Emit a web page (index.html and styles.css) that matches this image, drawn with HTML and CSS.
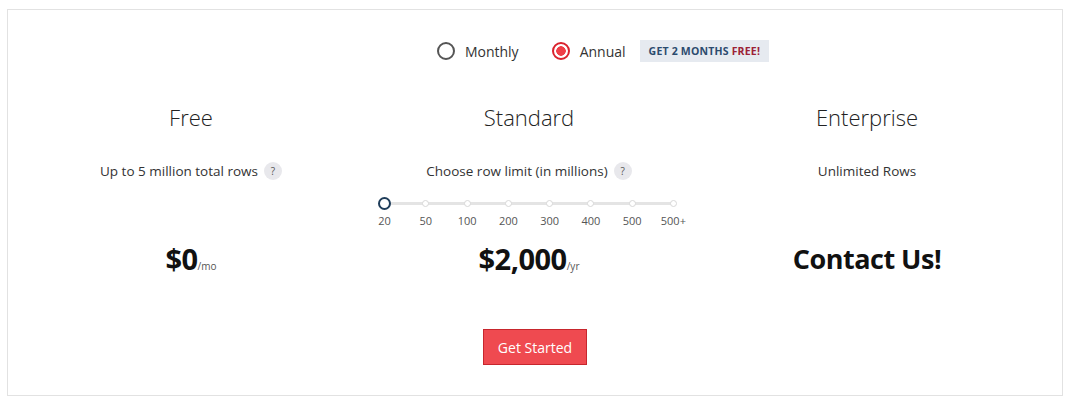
FILE: index.html
```html
<!DOCTYPE html>
<html lang="en">
<head>
    <meta charset="UTF-8">
    <meta name="viewport" content="width=device-width, initial-scale=1.0">
    <title>Pricing</title>
    <link rel="stylesheet" href="styles.css">
</head>
<body>
    <div class="card">
        <div class="billing">
            <label class="radio">
                <span class="dot"></span>
                Monthly
            </label>
            <label class="radio checked">
                <span class="dot"></span>
                Annual
            </label>
            <span class="promo">GET 2 MONTHS <em>FREE!</em></span>
        </div>

        <div class="plans">
            <div class="plan">
                <h2>Free</h2>
                <div class="detail">
                    <p class="limit">Up to 5 million total rows <span class="help">?</span></p>
                </div>
                <div class="price"><strong>$0</strong><small>/mo</small></div>
            </div>

            <div class="plan">
                <h2>Standard</h2>
                <div class="detail">
                    <p class="limit">Choose row limit (in millions) <span class="help">?</span></p>
                    <div class="slider">
                        <div class="track">
                            <span class="knob active"></span>
                            <span class="knob"></span>
                            <span class="knob"></span>
                            <span class="knob"></span>
                            <span class="knob"></span>
                            <span class="knob"></span>
                            <span class="knob"></span>
                            <span class="knob"></span>
                        </div>
                        <div class="ticks">
                            <span>20</span>
                            <span>50</span>
                            <span>100</span>
                            <span>200</span>
                            <span>300</span>
                            <span>400</span>
                            <span>500</span>
                            <span>500+</span>
                        </div>
                    </div>
                </div>
                <div class="price"><strong>$2,000</strong><small>/yr</small></div>
            </div>

            <div class="plan">
                <h2>Enterprise</h2>
                <div class="detail">
                    <p class="limit">Unlimited Rows</p>
                </div>
                <div class="price contact"><strong>Contact Us!</strong></div>
            </div>
        </div>

        <div class="actions">
            <button class="start">Get Started</button>
        </div>
    </div>
</body>
</html>
```

FILE: styles.css
```css
body {
    margin: 0;
    background-color: #fff;
    font-family: 'Open Sans', 'Noto Sans', sans-serif;
    color: #222;
}
.card {
    margin: 9px 7px 0 7px;
    height: 387px;
    box-sizing: border-box;
    border: 1px solid #e2e2e2;
    display: flex;
    flex-direction: column;
}
.billing {
    display: flex;
    justify-content: center;
    align-items: center;
    padding-left: 136px;
    margin-top: 30px;
    height: 22px;
    font-size: 14px;
    color: #333;
}
.radio {
    display: flex;
    align-items: center;
    gap: 10px;
    margin-right: 33px;
}
.radio + .radio {
    margin-right: 14px;
}
.dot {
    width: 18px;
    height: 18px;
    box-sizing: border-box;
    border: 2px solid #555;
    border-radius: 50%;
    background: #fff;
}
.radio.checked .dot {
    border-color: #d9222d;
    background: radial-gradient(circle, #ef3e47 0 4.5px, #fff 5px);
}
.promo {
    background-color: #e6eaf0;
    color: #2c4b6e;
    font-size: 10.5px;
    font-weight: 700;
    padding: 4px 9px;
    letter-spacing: 0.2px;
}
.promo em {
    font-style: normal;
    color: #9c2236;
}
.plans {
    display: grid;
    grid-template-columns: repeat(3, 338px);
    padding-left: 14px;
    margin-top: 40px;
}
.plan {
    display: flex;
    flex-direction: column;
    align-items: center;
}
h2 {
    margin: 0;
    font-size: 22px;
    font-weight: 300;
    line-height: 30px;
    color: #222;
}
.detail {
    height: 107px;
    display: flex;
    flex-direction: column;
    align-items: center;
}
.limit {
    margin: 29px 0 0 0;
    height: 20px;
    font-size: 13.5px;
    line-height: 20px;
    color: #333;
    display: flex;
    align-items: center;
    gap: 6px;
}
.help {
    width: 18px;
    height: 18px;
    border-radius: 50%;
    background-color: #e8e8ec;
    color: #555;
    font-size: 10px;
    line-height: 18px;
    text-align: center;
}
.slider {
    width: 330px;
    margin-top: 15px;
}
.track {
    display: grid;
    grid-template-columns: repeat(8, 1fr);
    justify-items: center;
    align-items: center;
    height: 14px;
    background: linear-gradient(#e4e4e4, #e4e4e4) center / calc(100% - 41px) 3px no-repeat;
}
.knob {
    width: 7px;
    height: 7px;
    box-sizing: border-box;
    border: 1px solid #d8d8d8;
    border-radius: 50%;
    background: #fff;
}
.knob.active {
    width: 13px;
    height: 13px;
    border: 2px solid #1f3d5a;
}
.ticks {
    display: grid;
    grid-template-columns: repeat(8, 1fr);
    justify-items: center;
    margin-top: 3px;
    font-size: 11px;
    line-height: 15px;
    color: #555;
}
.price {
    height: 40px;
    display: flex;
    align-items: baseline;
    line-height: 40px;
}
.price strong {
    font-size: 29px;
    font-weight: 700;
    color: #111;
    letter-spacing: -0.5px;
}
.price.contact strong {
    font-size: 27px;
}
.price small {
    font-size: 10px;
    color: #555;
}
.actions {
    display: flex;
    justify-content: center;
    margin-top: 50px;
}
.start {
    background-color: #ef4a50;
    color: #fff;
    border: 1px solid #c7262d;
    font-family: inherit;
    font-size: 14px;
    width: 104px;
    height: 36px;
    cursor: pointer;
}
```
